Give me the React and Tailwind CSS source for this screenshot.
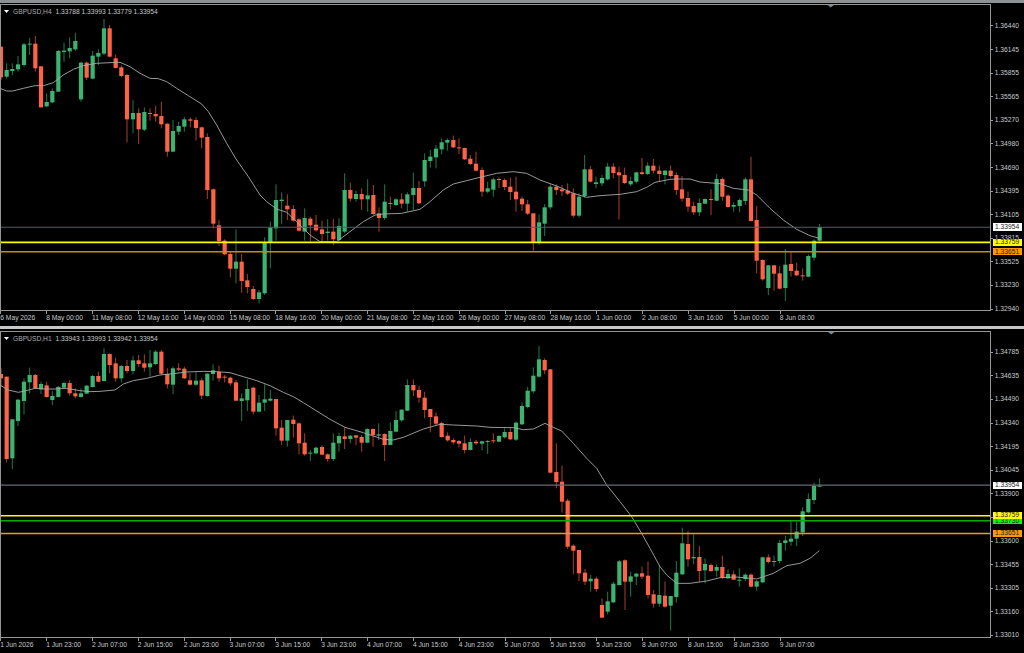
const G = 1, R = 0;

// Candle rows in zoomed (3x) coordinates: [x, high, bodyTop, bodyBottom, low, dir]
const topChunks = [
  { off: 0, rows: [
    [3,140,140,232,240,R],[20,190,210,230,235,G],[37,190,207,213,225,G],[54,168,193,208,215,G],[72,128,133,195,200,G],[89,113,131,134,165,G],[106,108,131,205,215,R],[123,199,199,322,322,R],[140,280,306,319,322,G],[157,265,273,307,310,G],[175,150,153,275,275,G],[192,128,152,156,185,G],[209,112,144,154,175,G],[226,98,123,148,152,G],[243,185,188,298,305,G],[260,185,188,233,240,R],[278,153,167,236,238,G],[295,148,159,170,195,G],[312,57,85,161,165,G],[329,75,85,170,172,R],[347,163,175,204,205,R],[364,197,202,228,232,R],[381,222,225,358,427,R],[399,300,339,358,400,G],[416,325,339,388,432,R],[433,322,336,389,393,G],[450,325,339,342,362,R],[467,318,342,349,365,R],[484,305,348,373,385,R],[502,370,371,455,470,R],[519,360,393,455,457,G],[536,365,378,395,405,G],[553,350,358,380,395,G],[571,352,358,362,382,R],[588,352,360,384,422,R],[605,380,382,413,445,R],[622,400,411,570,597,R],[640,565,568,671,685,R],[657,660,676,723,738,R],[674,718,722,763,765,R],[691,755,762,806,832,R],[708,688,785,806,850,G],[725,762,785,843,878,R],[742,822,841,861,880,R],[760,858,867,897,900,R],[777,870,877,897,910,G],[794,712,727,880,885,G],[811,665,683,727,805,G],[828,553,600,685,722,G],[845,577,599,603,673,G],[862,583,617,628,660,R],[880,615,627,662,665,R],[897,655,658,692,695,R],[914,625,654,695,722,G],[931,650,656,676,725,R],[948,645,674,691,695,R],[966,662,688,702,725,R],[983,658,695,699,722,G],[1000,657,695,718,735,R],[1017,655,678,720,725,G],
  ]},
  { off: 990, rows: [
    [44,520,570,695,700,G],[61,548,570,596,605,R],[78,572,582,597,605,G],[95,565,582,598,630,R],[113,538,586,598,635,G],[130,555,585,642,645,R],[147,622,640,654,695,R],[164,553,605,654,660,G],[181,590,609,612,628,R],[198,595,598,615,618,G],[215,580,598,611,625,R],[232,577,583,611,635,G],[250,518,564,585,630,G],[267,543,564,610,612,R],[284,460,480,544,560,G],[301,450,470,483,503,G],[318,435,446,472,505,G],[335,415,427,448,463,G],[352,415,420,428,452,G],[370,407,420,442,444,R],[387,415,442,445,462,R],[404,443,444,478,480,R],[421,465,476,492,495,R],[438,455,491,512,515,R],[456,502,510,575,590,R],[473,545,565,575,580,G],[490,533,538,569,590,G],[507,533,537,540,565,R],[524,535,540,561,570,R],[541,533,560,576,600,R],[558,530,575,598,635,R],[576,590,596,613,633,R],[593,600,613,641,645,R],[610,640,640,726,752,R],[627,643,667,726,735,G],[644,612,622,671,708,G],[661,553,560,622,628,G],[679,553,560,570,585,R],[696,555,568,574,588,R],[713,550,572,581,585,R],[730,565,580,647,652,R],[747,580,590,647,652,G],[764,465,508,588,593,G],[781,498,508,545,548,R],[798,530,547,552,565,G],[816,525,534,550,558,G],[833,488,500,538,542,G],[850,490,500,519,535,R],[867,500,517,526,658,R],[884,503,525,549,552,R],[902,530,543,553,558,G],[919,515,517,545,550,G],[936,474,517,522,525,R],[953,487,497,522,525,G],[970,477,497,512,520,R],[988,497,512,522,545,R],[1005,510,512,525,553,G],
  ]},
  { off: 1980, rows: [
    [32,497,512,528,533,R],[49,517,525,570,585,R],[66,528,568,596,605,R],[84,575,594,620,635,R],[101,605,618,637,645,R],[118,595,609,637,648,G],[135,595,597,611,612,G],[153,568,597,600,645,R],[170,522,537,602,603,G],[187,533,537,590,602,R],[204,583,587,621,623,R],[221,607,615,620,635,G],[239,595,600,618,637,G],[256,532,538,603,615,G],[273,470,538,663,665,R],[290,618,660,782,820,R],[308,778,780,838,842,R],[325,795,796,864,885,G],[342,795,796,821,872,R],[359,798,820,866,868,R],[376,747,794,864,903,G],[393,757,792,813,830,R],[410,788,812,826,828,R],[428,805,826,829,842,R],[445,763,768,830,832,G],[462,718,722,773,782,G],[479,672,681,722,725,G],
  ]},
];

const bottomChunks = [
  { off: 0, rows: [
    [3,130,147,160,185,R],[20,155,155,402,412,R],[37,283,283,400,432,G],[54,222,224,288,303,G],[72,160,170,228,268,G],[89,128,150,172,205,G],[106,147,150,190,192,R],[123,170,177,193,207,G],[140,170,181,216,218,R],[157,198,213,225,240,G],[175,183,186,216,217,G],[192,170,174,188,190,G],[209,165,174,205,212,R],[226,190,205,214,220,R],[243,190,205,216,218,G],[260,180,182,206,207,G],[278,150,153,186,187,G],[295,140,153,170,172,R],[312,70,87,168,170,G],[329,85,87,120,145,R],[347,98,115,160,170,R],[364,120,123,160,172,G],[381,105,123,138,145,R],[399,93,106,138,148,G],[416,90,106,117,125,R],[433,88,115,128,140,R],[450,75,115,127,155,G],[467,75,80,117,120,G],[484,75,80,146,150,R],[502,130,147,178,190,R],[519,125,130,179,207,G],[536,115,130,134,138,R],[553,125,131,160,162,R],[570,145,166,179,182,R],[588,142,167,179,183,G],[605,160,166,212,222,R],[622,145,146,213,215,G],[639,118,136,147,167,G],[657,122,141,160,170,R],[674,150,155,157,172,R],[691,155,158,175,182,R],[708,165,172,227,228,R],[725,205,220,228,288,G],[742,163,192,226,258,G],[760,185,188,260,268,R],[777,210,233,260,262,G],[794,178,223,233,258,G],[811,195,221,227,230,G],[828,222,222,310,332,R],[845,285,308,347,360,R],[862,285,285,347,365,G],[880,272,284,297,338,R],[897,293,295,355,388,R],[914,325,353,388,392,R],[931,375,383,386,408,G],[948,365,368,385,388,G],[966,362,366,389,390,R],[983,385,388,402,410,R],[1000,325,353,402,408,G],[1017,323,333,355,380,G],
  ]},
  { off: 990, rows: [
    [44,308,334,342,372,R],[61,330,332,342,355,G],[78,330,331,338,360,R],[95,330,336,353,380,R],[112,310,312,353,355,G],[129,310,312,330,365,R],[146,295,328,332,345,G],[164,325,327,360,408,R],[181,292,318,360,360,G],[198,258,285,320,322,G],[215,253,254,286,290,G],[232,163,180,257,258,G],[250,163,180,196,213,R],[267,182,195,218,233,R],[284,200,218,255,280,R],[301,252,252,276,322,R],[318,262,274,296,300,R],[335,290,294,336,338,R],[353,322,332,346,350,R],[370,340,345,352,358,R],[387,345,348,356,367,R],[404,332,355,375,385,R],[421,340,351,375,376,G],[438,345,350,355,360,R],[456,347,349,356,376,G],[473,345,348,350,387,G],[490,325,346,349,355,R],[507,330,333,350,352,G],[524,310,321,337,340,G],[541,310,321,343,345,R],[558,290,293,344,348,G],[576,232,243,298,300,G],[593,185,197,246,250,G],[610,127,152,199,205,G],[627,63,103,155,157,G],[644,100,105,136,147,R],[661,132,133,443,445,R],[679,355,441,471,490,R],[696,422,470,530,563,R],[713,522,527,665,672,R],[730,658,662,677,748,R],[747,675,675,745,768,R],[765,732,743,770,780,R],[782,750,761,769,800,G],[799,755,761,792,800,R],[816,820,840,878,880,R],[833,800,829,860,868,G],[850,770,776,832,835,G],[868,705,709,780,782,G],[885,703,706,770,855,R],[902,740,754,770,815,G],[919,743,746,755,780,G],[936,725,745,755,762,R],[954,710,752,810,820,R],[971,795,808,836,848,R],[988,722,810,836,845,G],
  ]},
  { off: 1980, rows: [
    [15,770,812,845,848,R],[32,813,813,842,917,G],[49,708,743,816,833,G],[67,608,655,748,750,G],[84,618,657,703,725,R],[101,628,696,700,718,G],[118,663,696,738,770,R],[135,700,717,736,775,G],[153,715,720,738,741,R],[170,718,726,737,755,G],[187,692,726,758,762,R],[204,733,747,760,762,G],[221,737,748,764,765,R],[238,730,764,767,785,G],[256,745,749,762,768,G],[273,745,749,785,787,R],[290,765,769,785,797,G],[308,695,697,772,775,G],[325,688,697,711,716,R],[342,692,708,710,725,G],[359,645,654,708,715,G],[376,632,646,654,677,G],[393,588,641,650,662,G],[410,590,620,641,663,G],[428,547,559,622,633,G],[445,505,522,562,565,G],[462,473,483,525,537,G],[479,460,482,485,486,G],
  ]},
];

const topMa = [[0,265],[20,273],[38,273],[70,265],[105,257],[130,257],[160,248],[190,225],[220,208],[250,197],[290,190],[330,188],[360,187],[390,200],[420,220],[450,235],[475,236],[500,245],[530,265],[565,287],[605,312],[625,335],[650,375],[680,430],[710,480],[745,530],[780,585],[800,605],[830,627],[860,637],[890,665],[930,705],[960,725],[1010,725],[1050,695],[1090,665],[1125,645],[1150,642],[1205,640],[1260,628],[1290,605],[1330,570],[1360,552],[1400,542],[1440,532],[1490,520],[1540,515],[1580,520],[1620,540],[1670,558],[1720,580],[1760,592],[1800,587],[1860,583],[1910,575],[1940,562],[1965,547],[2010,538],[2025,537],[2070,537],[2100,546],[2160,551],[2200,565],[2245,570],[2270,585],[2310,625],[2350,660],[2390,688],[2430,707],[2458,715]];

const bottomMa = [[0,180],[25,195],[55,202],[75,198],[105,190],[135,192],[165,192],[200,190],[240,197],[270,200],[300,199],[345,195],[370,177],[400,167],[440,160],[480,150],[520,146],[560,141],[610,139],[650,140],[690,143],[730,155],[770,167],[810,182],[850,202],[880,215],[910,233],[950,258],[990,283],[1035,307],[1090,323],[1150,343],[1180,345],[1210,337],[1270,312],[1320,298],[1360,300],[1430,303],[1470,307],[1540,308],[1570,314],[1600,312],[1635,295],[1660,307],[1685,318],[1720,355],[1760,400],[1790,430],[1820,480],[1860,530],[1895,575],[1925,625],[1950,670],[1980,725],[2000,750],[2030,775],[2070,775],[2120,768],[2160,758],[2210,756],[2270,762],[2320,745],[2360,722],[2400,715],[2430,700],[2458,677]];

const topLines = [
  { y: 227.2, c: "#565c66", w: 1.1 },
  { y: 242.4, c: "#ffff00", w: 1.6 },
  { y: 251.8, c: "#c98a08", w: 1.6 },
];
const bottomLines = [
  { y: 485.1, c: "#646a74", w: 1.1 },
  { y: 515.8, c: "#ffff00", w: 1.6 },
  { y: 520.8, c: "#08aa08", w: 1.6 },
  { y: 533.4, c: "#f29d00", w: 1.5 },
];

const topPrices = ["1.36440","1.36145","1.35855","1.35565","1.35270","1.34980","1.34690","1.34395","1.34105","1.33815","1.33525","1.33230","1.32940"];
const bottomPrices = ["1.34785","1.34635","1.34490","1.34340","1.34195","1.34045","1.33900","1.33750","1.33600","1.33455","1.33305","1.33160","1.33010"];

const topTimes = ["6 May 2026","8 May 00:00","11 May 08:00","12 May 16:00","14 May 00:00","15 May 08:00","18 May 16:00","20 May 00:00","21 May 08:00","22 May 16:00","26 May 00:00","27 May 08:00","28 May 16:00","1 Jun 00:00","2 Jun 08:00","3 Jun 16:00","5 Jun 00:00","8 Jun 08:00"];
const bottomTimes = ["1 Jun 2026","1 Jun 23:00","2 Jun 07:00","2 Jun 15:00","2 Jun 23:00","3 Jun 07:00","3 Jun 15:00","3 Jun 23:00","4 Jun 07:00","4 Jun 15:00","4 Jun 23:00","5 Jun 07:00","5 Jun 15:00","5 Jun 23:00","8 Jun 07:00","8 Jun 15:00","8 Jun 23:00","9 Jun 07:00"];

function Chart({ chunks, ma, lines, yBase, vb, marker }) {
  const y = (v) => yBase + v / 3;
  return (
    <svg viewBox={vb} className="block w-full h-full">
      {chunks.flatMap((ch) =>
        ch.rows.map(([x, h, t, b, l, d]) => {
          const cx = (ch.off + x) / 3;
          return (
            <g key={ch.off + "-" + x}>
              <line x1={cx} x2={cx} y1={y(h)} y2={y(l)} stroke={d ? "#1f7a4a" : "#a8402c"} strokeWidth="1" />
              <rect x={cx - 2.1} y={y(t)} width="4.2" height={Math.max((b - t) / 3, 1)} fill={d ? "#3cb371" : "#ff6347"} />
            </g>
          );
        })
      )}
      <polyline
        points={ma.map(([a, b]) => `${a / 3},${y(b)}`).join(" ")}
        fill="none"
        stroke="#a8a8ac"
        strokeWidth="0.9"
      />
      {lines.map((ln) => (
        <line key={ln.y} x1="0" x2="991" y1={ln.y} y2={ln.y} stroke={ln.c} strokeWidth={ln.w} />
      ))}
      <polygon points={marker} fill="#75879a" />
    </svg>
  );
}

function Header({ symbol, values }) {
  return (
    <div className="absolute left-[3px] top-[1.5px] flex items-center">
      <svg width="5" height="3" viewBox="0 0 5 3" className="mr-[4px]">
        <polygon points="0,0 5,0 2.5,3" fill="#ffffff" />
      </svg>
      <span className="text-[#a9adb2] w-[42.5px] whitespace-nowrap">{symbol}</span>
      <span className="text-[#c6c8ca] whitespace-nowrap">{values}</span>
    </div>
  );
}

function PriceAxis({ prices, pad, children }) {
  return (
    <div className={`relative w-[33px] flex flex-col ${pad}`}>
      {prices.map((p) => (
        <div key={p} className="h-[23.6px] shrink-0 flex items-center">
          <span className="w-[2px] h-px bg-[#9a9a9a] mr-[1.8px]" />
          <span className="text-[#c8cacc]">{p}</span>
        </div>
      ))}
      {children}
    </div>
  );
}

function Tag({ pos, bg, text }) {
  return (
    <div className={`absolute left-[1.5px] w-[29px] flex items-center pl-[2.5px] text-[#1a1a1a] ${pos} ${bg}`}>
      {text}
    </div>
  );
}

function TimeAxis({ times }) {
  return (
    <div className="flex h-[15px] pl-[0.3px]">
      {times.map((t) => (
        <div key={t} className="w-[45.85px] shrink-0 flex flex-col">
          <span className="w-px h-[3px] bg-[#9a9a9a]" />
          <span className="h-[8px] leading-[8px] whitespace-nowrap text-[#c8cacc]">{t}</span>
        </div>
      ))}
    </div>
  );
}

export default function App() {
  return (
    <div className="w-[1024px] h-[653px] bg-black flex flex-col overflow-hidden font-['Liberation_Sans',Arial,sans-serif] text-[6.7px]">
      {/* upper window */}
      <div className="h-[3px] bg-[#8f9092]" />
      <div className="h-[1px]" />
      <div className="flex h-[307px]">
        <div className="relative w-[991px] h-full border border-[#969696]">
          <Chart chunks={topChunks} ma={topMa} lines={topLines} yBase={0} vb="1 5 989 305" marker="827.5,5 834,5 830.75,7.6" />
          <Header symbol="GBPUSD,H4" values="1.33788 1.33993 1.33779 1.33954" />
        </div>
        <PriceAxis prices={topPrices} pad="pt-[10.2px]">
          <Tag pos="top-[219px] h-[8px]" bg="bg-white" text="1.33954" />
          <Tag pos="top-[234.6px] h-[7.6px]" bg="bg-[#ffff00]" text="1.33759" />
          <Tag pos="top-[244px] h-[7.4px]" bg="bg-[#ff9900]" text="1.33651" />
        </PriceAxis>
      </div>
      <TimeAxis times={topTimes} />

      {/* lower window */}
      <div className="h-[3px] bg-[#c6c8ca]" />
      <div className="h-[2px]" />
      <div className="flex h-[307px]">
        <div className="relative w-[991px] h-full border border-[#969696]">
          <Chart chunks={bottomChunks} ma={bottomMa} lines={bottomLines} yBase={325} vb="1 332 989 305" marker="828,332 834.5,332 831.25,334.6" />
          <Header symbol="GBPUSD,H1" values="1.33943 1.33993 1.33942 1.33954" />
        </div>
        <PriceAxis prices={bottomPrices} pad="pt-[9.5px]">
          <Tag pos="top-[150.6px] h-[7.6px]" bg="bg-white" text="1.33954" />
          <Tag pos="top-[187.4px] h-[5.6px]" bg="bg-[#00ff00]" text="1.33730" />
          <Tag pos="top-[180.7px] h-[7px]" bg="bg-[#ffff00]" text="1.33759" />
          <Tag pos="top-[198.7px] h-[7.4px]" bg="bg-[#ff9900]" text="1.33651" />
        </PriceAxis>
      </div>
      <TimeAxis times={bottomTimes} />
    </div>
  );
}
